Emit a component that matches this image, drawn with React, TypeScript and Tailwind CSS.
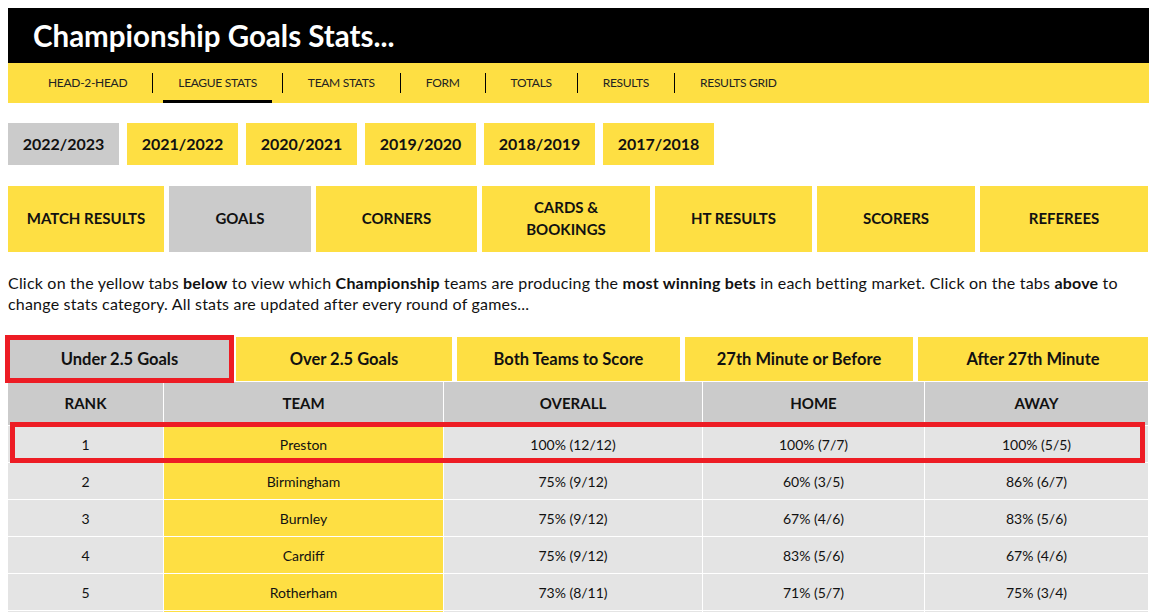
import React from 'react';

const navItems = ['HEAD-2-HEAD', 'LEAGUE STATS', 'TEAM STATS', 'FORM', 'TOTALS', 'RESULTS', 'RESULTS GRID'];

const seasons = ['2022/2023', '2021/2022', '2020/2021', '2019/2020', '2018/2019', '2017/2018'];

const categories = [
  { name: 'MATCH RESULTS', width: 'w-[156px]' },
  { name: 'GOALS', width: 'w-[142px]' },
  { name: 'CORNERS', width: 'w-[161px]' },
  { name: 'CARDS &\nBOOKINGS', width: 'w-[168px]' },
  { name: 'HT RESULTS', width: 'w-[157px]' },
  { name: 'SCORERS', width: 'w-[158px]' },
  { name: 'REFEREES', width: 'w-[168px]' },
];

const markets = [
  { name: 'Under 2.5 Goals', width: 'w-[223px]' },
  { name: 'Over 2.5 Goals', width: 'w-[216px]' },
  { name: 'Both Teams to Score', width: 'w-[223px]' },
  { name: '27th Minute or Before', width: 'w-[228px]' },
  { name: 'After 27th Minute', width: 'w-[230px]' },
];

const rows = [
  { rank: 1, team: 'Preston', overall: '100% (12/12)', home: '100% (7/7)', away: '100% (5/5)' },
  { rank: 2, team: 'Birmingham', overall: '75% (9/12)', home: '60% (3/5)', away: '86% (6/7)' },
  { rank: 3, team: 'Burnley', overall: '75% (9/12)', home: '67% (4/6)', away: '83% (5/6)' },
  { rank: 4, team: 'Cardiff', overall: '75% (9/12)', home: '83% (5/6)', away: '67% (4/6)' },
  { rank: 5, team: 'Rotherham', overall: '73% (8/11)', home: '71% (5/7)', away: '75% (3/4)' },
];

const gridCols = 'grid grid-cols-[155px_279px_258px_221px_223px] gap-x-px';

export default function App() {
  return (
    <div className="min-h-screen bg-white p-2 text-[#111]" style={{ fontFamily: 'Lato, "Open Sans", sans-serif' }}>
      {/* Title */}
      <div className="flex h-[55px] items-center bg-black pl-[25px]">
        <h1 className="text-[29.5px] font-bold leading-none text-white">Championship Goals Stats...</h1>
      </div>

      {/* Top navigation */}
      <nav className="flex h-[40px] items-center bg-[#fedf43] pl-[15px]">
        {navItems.map((item, i) => (
          <React.Fragment key={item}>
            <a
              className={`mx-[10px] flex h-full items-center px-[15px] text-[12px] tracking-[-0.3px] text-[#222] ${
                item === 'LEAGUE STATS' ? 'border-b-[3px] border-black pt-[3px]' : ''
              }`}
            >
              {item}
            </a>
            {i < navItems.length - 1 && <span className="h-[20px] w-px bg-black" />}
          </React.Fragment>
        ))}
      </nav>

      {/* Seasons */}
      <div className="mt-[20px] flex gap-2">
        {seasons.map((s, i) => (
          <div
            key={s}
            className={`flex h-[42px] w-[111px] items-center justify-center text-[16px] font-bold ${
              i === 0 ? 'bg-[#cbcbcb]' : 'bg-[#fedf43]'
            }`}
          >
            {s}
          </div>
        ))}
      </div>

      {/* Stat categories */}
      <div className="mt-[21px] flex gap-[5px]">
        {categories.map((c) => (
          <div
            key={c.name}
            className={`flex h-[66px] items-center justify-center whitespace-pre-line pb-[2px] text-center text-[15px] font-bold leading-[22px] ${c.width} ${
              c.name === 'GOALS' ? 'bg-[#cbcbcb]' : 'bg-[#fedf43]'
            }`}
          >
            {c.name}
          </div>
        ))}
      </div>

      <p className="mt-[20px] text-[16px] leading-[21px] tracking-[0.2px] text-[#111]">
        Click on the yellow tabs <b>below</b> to view which <b>Championship</b> teams are producing the{' '}
        <b>most winning bets</b> in each betting market. Click on the tabs <b>above</b> to change stats category.
        All stats are updated after every round of games...
      </p>

      {/* Markets */}
      <div className="mt-[23px] flex gap-[5px]">
        {markets.map((m, i) => (
          <div
            key={m.name}
            className={`relative flex h-[44px] items-center justify-center text-[16.5px] font-bold ${m.width} ${
              i === 0 ? 'bg-[#cbcbcb]' : 'bg-[#fedf43]'
            }`}
          >
            {m.name}
            {i === 0 && (
              <span className="absolute -top-[2px] -bottom-[2px] -left-[3px] -right-[3px] border-[5px] border-[#ed1c24]" />
            )}
          </div>
        ))}
      </div>

      {/* Table */}
      <div className="mt-px">
        <div className={`${gridCols} h-[43px] bg-white text-[15px] font-bold`}>
          {['RANK', 'TEAM', 'OVERALL', 'HOME', 'AWAY'].map((h) => (
            <div key={h} className="flex items-center justify-center bg-[#cbcbcb]">
              {h}
            </div>
          ))}
        </div>
        {rows.map((r) => (
          <div key={r.rank} className={`relative mt-px ${gridCols} h-[36px] text-[14px]`}>
            <div className="flex items-center justify-center bg-[#e4e4e4]">{r.rank}</div>
            <div className="flex items-center justify-center bg-[#fedf43]">{r.team}</div>
            <div className="flex items-center justify-center bg-[#e4e4e4]">{r.overall}</div>
            <div className="flex items-center justify-center bg-[#e4e4e4]">{r.home}</div>
            <div className="flex items-center justify-center bg-[#e4e4e4]">{r.away}</div>
            {r.rank === 1 && (
              <span className="absolute -top-[4px] -bottom-[1px] left-[2px] right-[4px] border-[5px] border-[#ed1c24]" />
            )}
          </div>
        ))}
        <div className={`mt-px ${gridCols} h-[36px]`}>
          <div className="bg-[#e4e4e4]" />
          <div className="bg-[#fedf43]" />
          <div className="bg-[#e4e4e4]" />
          <div className="bg-[#e4e4e4]" />
          <div className="bg-[#e4e4e4]" />
        </div>
      </div>
    </div>
  );
}
